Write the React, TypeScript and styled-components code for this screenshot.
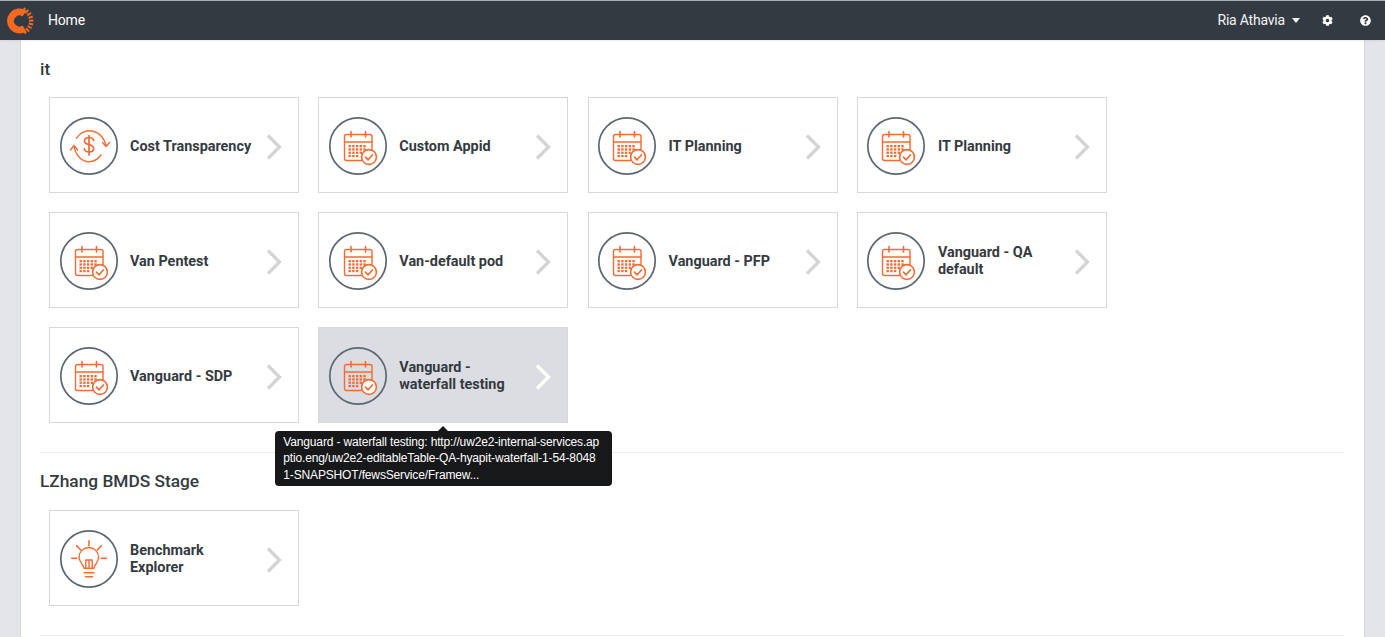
import React from "react";
import styled, { createGlobalStyle } from "styled-components";
import { FaCog, FaQuestionCircle } from "react-icons/fa";

const GlobalStyle = createGlobalStyle`
  html, body {
    margin: 0;
    padding: 0;
    height: 637px;
    overflow: hidden;
    background: #e4e5ea;
    font-family: Roboto, "Liberation Sans", sans-serif;
  }
`;

const Page = styled.div`
  height: 637px;
  overflow: hidden;
`;

const Header = styled.header`
  height: 39px;
  border-top: 1px solid #a9adb1;
  background: #343a42;
  display: flex;
  align-items: center;
  color: #fff;
  box-shadow: 0 1px 2px rgba(0, 0, 0, 0.08);
  position: relative;
`;

const Logo = styled.svg`
  width: 30px;
  height: 30px;
  margin-left: 5px;
`;

const HomeLink = styled.span`
  margin-left: 13px;
  padding-bottom: 1px;
  font-size: 14px;
  letter-spacing: -0.2px;
  line-height: 20px;
`;

const HeaderRight = styled.div`
  margin-left: auto;
  display: flex;
  align-items: center;
  padding-right: 14px;
`;

const UserName = styled.span`
  padding-bottom: 1px;
  font-size: 14px;
  letter-spacing: -0.2px;
  line-height: 20px;
  color: #f2f3f4;
`;

const Caret = styled.span`
  margin-left: 7px;
  width: 0;
  height: 0;
  border-left: 4.5px solid transparent;
  border-right: 4.5px solid transparent;
  border-top: 5px solid #f2f3f4;
`;

const HeaderIcon = styled.span<{ $gap: number }>`
  margin-left: ${(p) => p.$gap}px;
  display: flex;
  font-size: 11px;
  color: #fff;
`;

const Main = styled.main`
  margin: 0 20px;
  height: 598px;
  box-sizing: border-box;
  background: #fff;
  border-left: 1px solid #d9dade;
  border-right: 1px solid #d9dade;
  padding: 0 19px;
`;

const Section = styled.section`
  border-bottom: 1px solid #eeeeef;
  padding-bottom: 29px;
`;

const SectionTitle = styled.h2<{ $top: number }>`
  margin: 0;
  padding-top: ${(p) => p.$top}px;
  font-size: 17.3px;
  line-height: 20px;
  font-weight: 500;
  color: #343a40;
`;

const CardGrid = styled.div<{ $top: number }>`
  display: grid;
  grid-template-columns: repeat(4, 250px);
  column-gap: 19.3px;
  row-gap: 19px;
  margin-top: ${(p) => p.$top}px;
  padding-left: 9px;
`;

const Card = styled.div<{ $active?: boolean }>`
  position: relative;
  height: 96px;
  box-sizing: border-box;
  border: 1px solid #d8d8d8;
  background: ${(p) => (p.$active ? "#dcdde3" : "#fff")};
  display: flex;
  align-items: center;
  padding-left: 8.5px;
`;

const IconRing = styled.svg`
  width: 60px;
  height: 60px;
  flex: none;
  margin-top: 2px;
`;

const CardLabel = styled.div`
  margin-left: 11.5px;
  width: 126px;
  font-size: 14.4px;
  line-height: 17px;
  font-weight: 700;
  color: #343a40;
  position: relative;
  top: 1px;
`;

const Chevron = styled.svg`
  position: absolute;
  right: 15px;
  top: 35px;
  width: 18px;
  height: 28px;
`;

const Tooltip = styled.div`
  position: absolute;
  z-index: 2;
  left: -44px;
  top: 103px;
  width: 337px;
  height: 55px;
  box-sizing: border-box;
  padding: 2.5px 8px;
  background: #17181a;
  border-radius: 4px;
  color: #fff;
  font-family: "Liberation Sans", Arial, sans-serif;
  font-size: 12px;
  letter-spacing: -0.15px;
  line-height: 16.5px;

  &::before {
    content: "";
    position: absolute;
    left: 163px;
    top: -5px;
    border-left: 5px solid transparent;
    border-right: 5px solid transparent;
    border-bottom: 5px solid #17181a;
  }
`;

const TipLine = styled.div`
  white-space: nowrap;
`;

const orange = "#f26c35";

const Ring = ({ children }: { children: React.ReactNode }) => (
  <IconRing viewBox="0 0 60 60" fill="none">
    <circle cx="30" cy="30" r="28.200" stroke="#5d6770" strokeWidth="1.700" />
    <g stroke={orange} strokeWidth="1.400" strokeLinecap="round" strokeLinejoin="round">
      {children}
    </g>
  </IconRing>
);

const CalendarIcon = () => (
  <Ring>
    <path d="M34 44.500H18.500a2 2 0 0 1-2-2V20.500a2 2 0 0 1 2-2h23.500a2 2 0 0 1 2 2v13" />
    <path d="M16.500 26h27.500" />
    <path d="M23 15.500v5.500M37.500 15.500v5.500" strokeWidth="1.600" />
    <g fill={orange} stroke="none">
      {[0, 1, 2, 3, 4].map((c) =>
        [0, 1, 2, 3].map((r) =>
          r === 3 && c > 2 ? null : (
            <rect key={`${c}-${r}`} x={20.500 + c * 3.700} y={29 + r * 3.300} width="2.400" height="2.300" />
          )
        )
      )}
    </g>
    <circle cx="41" cy="41" r="7.400" fill="#fff" strokeWidth="1.600" />
    <path d="M37.500 41.200l2.600 2.600 4.300-4.800" strokeWidth="1.700" />
  </Ring>
);

const CostIcon = () => (
  <Ring>
    <path d="M17.300 22.300C21 17 26 14.700 30 14.700c8 0 15 5.300 17 15.300" />
    <path d="M43.500 26.500l3.500 4 3.500-4" />
    <path d="M15 29.500c1 9.500 8 16.200 15 16.200 5 0 9-2.700 12-6.700" />
    <path d="M11.500 34l3.500-4.500 3.500 4.500" />
    <path d="M34.700 24.500c-.4-1.800-2.200-3-4.700-3-2.700 0-4.500 1.400-4.500 3.400 0 2.300 2 3 4.500 3.700 2.500.7 4.700 1.500 4.700 3.900 0 2-2 3.400-4.700 3.400-2.500 0-4.300-1.300-4.700-3.300" strokeWidth="1.700" />
    <path d="M30 19.500v19.500" strokeWidth="1.700" />
  </Ring>
);

const BulbIcon = () => (
  <Ring>
    <path d="M25 39.300c0-3.500-5-6-5-11a9.800 9.800 0 0 1 19.600 0c0 5-4.600 7.500-4.600 11z" />
    <path d="M26.800 39.300V31h6.400v8.300M30 31v8.300" />
    <path d="M25 43.700h10M26.500 47.700h7" strokeWidth="1.600" />
    <path d="M30 11.700v5M17.700 16.700l4 4.300M42.300 16.700l-4 4.300M12.700 29.300h5M42.300 29.300h5" strokeWidth="1.600" />
  </Ring>
);

const ArrowRight = ({ color }: { color: string }) => (
  <Chevron viewBox="0 0 18 28" fill="none">
    <path d="M3 2.500L14.500 14 3 25.500" stroke={color} strokeWidth="3.300" />
  </Chevron>
);

type Item = { label: string; icon: "cost" | "calendar" | "bulb"; active?: boolean; tip?: string[] };

const icons = { cost: CostIcon, calendar: CalendarIcon, bulb: BulbIcon };

const itItems: Item[] = [
  { label: "Cost Transparency", icon: "cost" },
  { label: "Custom Appid", icon: "calendar" },
  { label: "IT Planning", icon: "calendar" },
  { label: "IT Planning", icon: "calendar" },
  { label: "Van Pentest", icon: "calendar" },
  { label: "Van-default pod", icon: "calendar" },
  { label: "Vanguard - PFP", icon: "calendar" },
  { label: "Vanguard - QA default", icon: "calendar" },
  { label: "Vanguard - SDP", icon: "calendar" },
  {
    label: "Vanguard - waterfall testing",
    icon: "calendar",
    active: true,
    tip: [
      "Vanguard - waterfall testing: http://uw2e2-internal-services.ap",
      "ptio.eng/uw2e2-editableTable-QA-hyapit-waterfall-1-54-8048",
      "1-SNAPSHOT/fewsService/Framew...",
    ],
  },
];

const logoTicks = [-66, -50, -34, -18, -2, 14, 30, 46, 62].map((deg) => {
  const a = (deg * Math.PI) / 180;
  return `M${14 + 10 * Math.cos(a)} ${15 + 10 * Math.sin(a)}L${14 + 14.500 * Math.cos(a)} ${15 + 14.500 * Math.sin(a)}`;
});

const AppCard = ({ item }: { item: Item }) => {
  const Icon = icons[item.icon];
  return (
    <Card $active={item.active}>
      <Icon />
      <CardLabel>{item.label}</CardLabel>
      <ArrowRight color={item.active ? "#ffffff" : "#d4d4d4"} />
      {item.tip && (
        <Tooltip>
          {item.tip.map((line) => (
            <TipLine key={line}>{line}</TipLine>
          ))}
        </Tooltip>
      )}
    </Card>
  );
};

const App = () => {
  return (
    <Page>
      <GlobalStyle />
      <Header>
        <Logo viewBox="0 0 30 30" fill="none">
          <path d="M19.500 7.500A9 9 0 1 0 19.500 22.500" stroke="#f26a21" strokeWidth="7" />
          <path d={logoTicks.join("")} stroke="#f26a21" strokeWidth="2" />
        </Logo>
        <HomeLink>Home</HomeLink>
        <HeaderRight>
          <UserName>Ria Athavia</UserName>
          <Caret />
          <HeaderIcon $gap={22}>
            <FaCog />
          </HeaderIcon>
          <HeaderIcon $gap={27}>
            <FaQuestionCircle />
          </HeaderIcon>
        </HeaderRight>
      </Header>
      <Main>
        <Section>
          <SectionTitle $top={19}>it</SectionTitle>
          <CardGrid $top={18}>
            {itItems.map((item, i) => (
              <AppCard key={i} item={item} />
            ))}
          </CardGrid>
        </Section>
        <Section>
          <SectionTitle $top={18}>LZhang BMDS Stage</SectionTitle>
          <CardGrid $top={19}>
            <AppCard item={{ label: "Benchmark Explorer", icon: "bulb" }} />
          </CardGrid>
        </Section>
      </Main>
    </Page>
  );
};

export default App;
